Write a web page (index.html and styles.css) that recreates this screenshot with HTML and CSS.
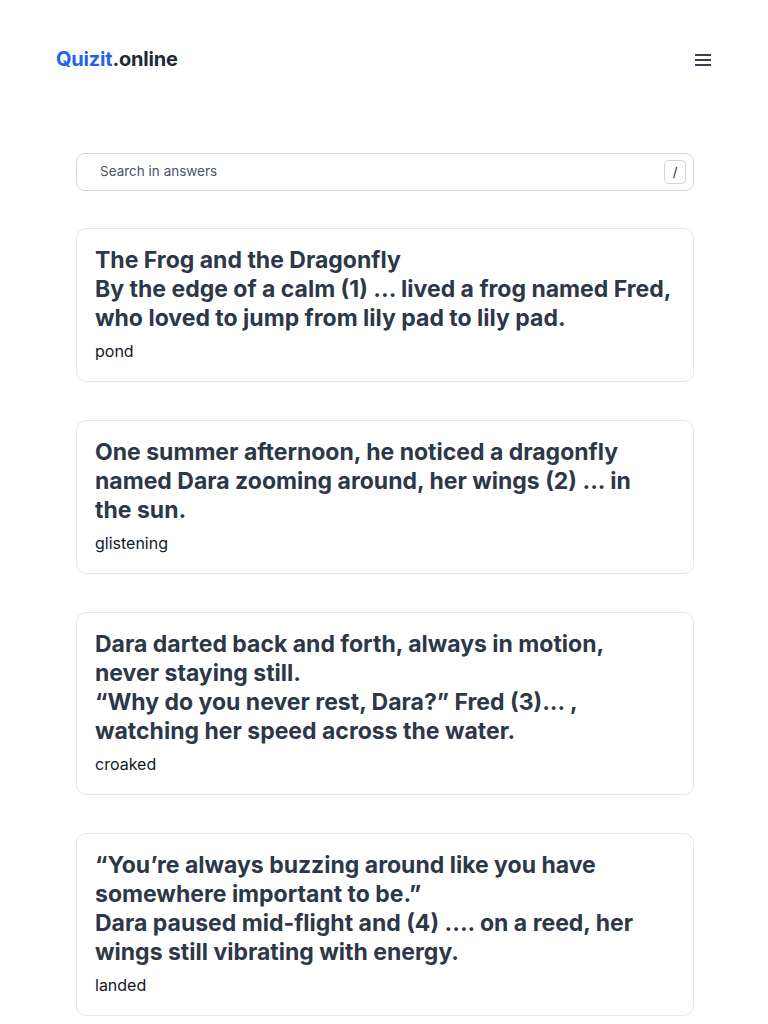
FILE: index.html
```html
<!DOCTYPE html>
<html lang="en">
<head>
<meta charset="utf-8">
<title>Quizit.online</title>
<link rel="stylesheet" href="styles.css">
</head>
<body>
<header class="header">
  <a class="logo" href="#"><span class="logo-brand">Quizit</span>.online</a>
  <button class="menu" aria-label="Menu">
    <svg width="18" height="14" viewBox="0 0 18 14"><path d="M1 2h16M1 7h16M1 12h16" stroke="#374151" stroke-width="2" fill="none"/></svg>
  </button>
</header>
<main class="main">
  <label class="search">
    <span class="search-placeholder">Search in answers</span>
    <kbd class="kbd">/</kbd>
  </label>
  <section class="card">
    <h2 class="question">The Frog and the Dragonfly<br>By the edge of a calm (1) ... lived a frog named Fred, who loved to jump from lily pad to lily pad.</h2>
    <p class="answer">pond</p>
  </section>
  <section class="card">
    <h2 class="question">One summer afternoon, he noticed a dragonfly named Dara zooming around, her wings (2) ... in the&nbsp;sun.</h2>
    <p class="answer">glistening</p>
  </section>
  <section class="card">
    <h2 class="question">Dara darted back and forth, always in motion, never&nbsp;staying still.<br>“Why do you never rest, Dara?” Fred (3)... , watching&nbsp;her speed across the water.</h2>
    <p class="answer">croaked</p>
  </section>
  <section class="card">
    <h2 class="question">“You’re always buzzing around like you have somewhere important to be.”<br>Dara paused mid-flight and (4) .... on a reed, her wings still vibrating with energy.</h2>
    <p class="answer">landed</p>
  </section>
</main>
</body>
</html>
```

FILE: styles.css
```css
* { box-sizing: border-box; }
body {
  margin: 0;
  font-family: Inter, "Noto Sans", sans-serif;
  background: #fff;
  color: #111827;
}
.header {
  display: flex;
  align-items: center;
  justify-content: space-between;
  height: 117px;
  padding: 0 56px 0 56px;
}
.logo {
  font-size: 20px;
  font-weight: 700;
  color: #1f2937;
  text-decoration: none;
  letter-spacing: -0.2px;
}
.logo-brand { color: #2563eb; }
.menu {
  border: 0;
  background: none;
  padding: 0;
  width: 18px;
  height: 14px;
  display: flex;
  margin-top: 2px;
}
.main {
  padding: 36px 74px 0 76px;
  display: flex;
  flex-direction: column;
  gap: 38px;
}
.search {
  display: flex;
  align-items: center;
  justify-content: space-between;
  height: 38px;
  border: 1px solid #d1d5db;
  border-radius: 9px;
  padding: 0 7px 3px 23px;
  margin-bottom: -1px;
}
.search-placeholder {
  font-size: 13.5px;
  color: #4b5563;
}
.kbd {
  display: flex;
  align-items: center;
  justify-content: center;
  width: 22px;
  height: 24px;
  margin-top: 3px;
  border: 1px solid #d1d5db;
  border-radius: 5px;
  font-family: Inter, sans-serif;
  font-size: 13px;
  color: #1f2937;
}
.card {
  border: 1px solid #e5e7eb;
  border-radius: 10px;
  padding: 17px 16px 18px 18px;
}
.question {
  margin: 0;
  font-size: 23px;
  line-height: 29px;
  font-weight: 700;
  color: #2d3748;
}
.answer {
  margin: 6px 0 0;
  font-size: 16px;
  line-height: 24px;
  color: #111827;
}
```
